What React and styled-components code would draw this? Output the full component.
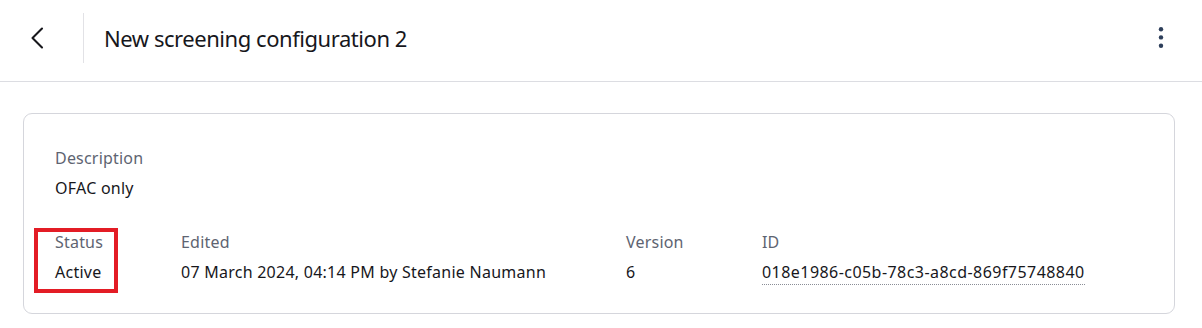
import React from "react";
import styled, { createGlobalStyle } from "styled-components";

const GlobalStyle = createGlobalStyle`
  html, body {
    margin: 0;
    padding: 0;
    background: #ffffff;
  }
  body {
    font-family: "Segoe UI", "Noto Sans", "Open Sans", sans-serif;
    color: #17171c;
  }
  *, *::before, *::after { box-sizing: border-box; }
`;

const Page = styled.div`
  width: 1202px;
  min-height: 328px;
  background: #fff;
`;

const Header = styled.header`
  height: 82px;
  padding: 13px 29px 0 25px;
  border-bottom: 1px solid #dcdde2;
  display: flex;
  align-items: flex-start;
`;

const HeaderInner = styled.div`
  height: 50px;
  flex: 1;
  display: flex;
  align-items: center;
`;

const IconButton = styled.button`
  width: 24px;
  height: 24px;
  padding: 0;
  border: none;
  background: transparent;
  display: flex;
  align-items: center;
  justify-content: center;
  cursor: pointer;
  color: ${(p) => p.$color || "#17171c"};
`;

const Divider = styled.div`
  width: 1px;
  height: 50px;
  background: #e2e2e6;
  margin-left: 34px;
`;

const Title = styled.h1`
  margin: 0 0 0 20px;
  flex: 1;
  font-size: 22px;
  font-weight: 400;
  line-height: 50px;
  letter-spacing: -0.45px;
  color: #17171c;
  white-space: nowrap;
`;

const Main = styled.main`
  padding: 31px 27px 0 23px;
`;

const Card = styled.section`
  border: 1px solid #d5d6dc;
  border-radius: 9px;
  padding: 32px 31px 29px;
`;

const FieldRow = styled.div`
  display: grid;
  grid-template-columns: 126px 445px 136px auto;
  margin-top: 30px;
`;

const Field = styled.div`
  position: relative;
  display: flex;
  flex-direction: column;
  gap: 6px;

  ${(p) =>
    p.$highlighted &&
    `
    &::after {
      content: "";
      position: absolute;
      left: -21px;
      top: -2px;
      width: 84px;
      height: 65px;
      border: 4px solid #e31c25;
      pointer-events: none;
    }
  `}
`;

const Label = styled.div`
  font-size: 16px;
  line-height: 24px;
  color: #5e6471;
  letter-spacing: 0.2px;
  white-space: nowrap;
`;

const Value = styled.div`
  font-size: 16px;
  line-height: 24px;
  color: #17171c;
  letter-spacing: 0.25px;
  white-space: nowrap;
`;

const CopyId = styled.span`
  letter-spacing: 0.45px;
  border-bottom: 1px dotted #8a8d96;
  padding-bottom: 1px;
`;

const ChevronLeft = () => (
  <svg width="24" height="24" viewBox="0 0 24 24" fill="none">
    <path
      d="M17 2.5 L7.5 12 L17 21.5"
      stroke="currentColor"
      strokeWidth="2.1"
      strokeLinecap="round"
      strokeLinejoin="round"
    />
  </svg>
);

const Kebab = () => (
  <svg width="24" height="24" viewBox="0 0 24 24" fill="currentColor">
    <circle cx="12" cy="3.2" r="2.2" />
    <circle cx="12" cy="11.4" r="2.2" />
    <circle cx="12" cy="19.7" r="2.2" />
  </svg>
);

const fields = [
  { label: "Status", value: "Active", highlighted: true },
  { label: "Edited", value: "07 March 2024, 04:14 PM by Stefanie Naumann" },
  { label: "Version", value: "6" },
  { label: "ID", value: "018e1986-c05b-78c3-a8cd-869f75748840", copy: true },
];

export default function App() {
  return (
    <Page>
      <GlobalStyle />
      <Header>
        <HeaderInner>
          <IconButton aria-label="Back">
            <ChevronLeft />
          </IconButton>
          <Divider />
          <Title>New screening configuration 2</Title>
          <IconButton aria-label="More" $color="#2d3e5a">
            <Kebab />
          </IconButton>
        </HeaderInner>
      </Header>
      <Main>
        <Card>
          <Field>
            <Label>Description</Label>
            <Value>OFAC only</Value>
          </Field>
          <FieldRow>
            {fields.map((f) => (
              <Field key={f.label} $highlighted={f.highlighted}>
                <Label>{f.label}</Label>
                <Value>{f.copy ? <CopyId>{f.value}</CopyId> : f.value}</Value>
              </Field>
            ))}
          </FieldRow>
        </Card>
      </Main>
    </Page>
  );
}
